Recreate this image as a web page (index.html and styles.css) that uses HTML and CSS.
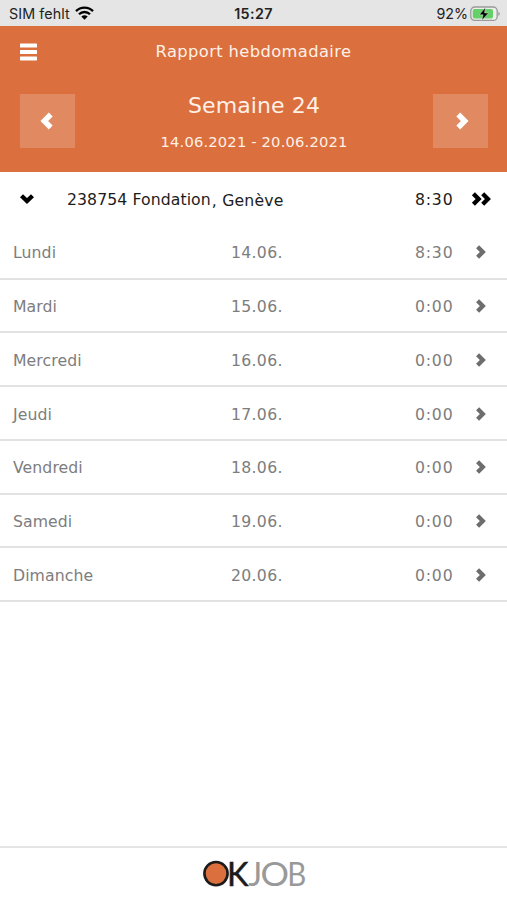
FILE: index.html
```html
<!DOCTYPE html>
<html lang="fr">
<head>
<meta charset="utf-8">
<title>Rapport hebdomadaire</title>
<link rel="stylesheet" href="styles.css">
</head>
<body>
<svg class="defs" width="0" height="0" aria-hidden="true">
  <symbol id="chevron" viewBox="0 0 12 16"><path d="M2.6 2.8 7.8 8l-5.2 5.2" fill="none" stroke="currentColor" stroke-width="4.3"/></symbol>
</svg>
<div class="status">
  <div class="carrier"><span>SIM fehlt</span>
    <svg class="wifi" width="19" height="14" viewBox="0 0 19 14" fill="none" stroke="#000" stroke-width="2.3"><path d="M1 5.1C5.6.4 13.4.4 18 5.1M4 8.3C7 5.2 12 5.2 15 8.3"/><path d="M6.3 10.6Q9.5 8 12.7 10.6L9.5 13.8Z" fill="#000" stroke="none"/></svg>
  </div>
  <div class="clock">15:27</div>
  <div class="power"><span>92%</span>
    <svg width="31" height="16" viewBox="0 0 31 16"><rect x=".8" y="1" width="26.4" height="13.4" rx="4" fill="#eee" stroke="#999" stroke-width="1.3"/><rect x="2.7" y="3" width="20.3" height="9.5" rx="2" fill="#65cf68"/><path d="M28.4 5.4q2.8 2.3 0 4.6z" fill="#999"/><path d="M15.3 1.6 9.3 8.8h3.8l-1.3 5.6 6.7-7.5h-3.9z" fill="#000" stroke="#d9f2d9" stroke-width=".5"/></svg>
  </div>
</div>
<header class="header">
  <div class="titlebar">
    <svg class="menu" width="17" height="18" viewBox="0 0 17 18" fill="#fff"><rect width="17" height="4" rx=".6" y=".5"/><rect y="7" width="17" height="4" rx=".6"/><rect y="13.4" width="17" height="4" rx=".6"/></svg>
    <h1>Rapport hebdomadaire</h1>
  </div>
  <div class="week">
    <button class="step"><svg class="flip" width="15" height="20"><use href="#chevron"/></svg></button>
    <div class="period"><div class="number">Semaine 24</div><div class="range">14.06.2021 - 20.06.2021</div></div>
    <button class="step"><svg width="15" height="20"><use href="#chevron"/></svg></button>
  </div>
</header>
<main class="list">
  <div class="project">
    <svg width="16" height="12" viewBox="0 0 16 12"><path d="M2.5 2.7 8 8.1l5.5-5.4" fill="none" stroke="#000" stroke-width="4.3"/></svg>
    <div class="name">238754 Fondation<span class="town">, Genève</span></div>
    <div class="hours">8:30</div>
    <svg class="double" width="21" height="16" viewBox="0 0 21 16"><path d="M2.4 2.8 7.6 8l-5.2 5.2M11.7 2.8 16.9 8l-5.2 5.2" fill="none" stroke="#000" stroke-width="4.3"/></svg>
  </div>
  <div class="row"><span>Lundi</span><span class="date">14.06.</span><span class="hours">8:30</span><svg width="12" height="16"><use href="#chevron"/></svg></div>
  <div class="row"><span>Mardi</span><span class="date">15.06.</span><span class="hours">0:00</span><svg width="12" height="16"><use href="#chevron"/></svg></div>
  <div class="row"><span>Mercredi</span><span class="date">16.06.</span><span class="hours">0:00</span><svg width="12" height="16"><use href="#chevron"/></svg></div>
  <div class="row"><span>Jeudi</span><span class="date">17.06.</span><span class="hours">0:00</span><svg width="12" height="16"><use href="#chevron"/></svg></div>
  <div class="row"><span>Vendredi</span><span class="date">18.06.</span><span class="hours">0:00</span><svg width="12" height="16"><use href="#chevron"/></svg></div>
  <div class="row"><span>Samedi</span><span class="date">19.06.</span><span class="hours">0:00</span><svg width="12" height="16"><use href="#chevron"/></svg></div>
  <div class="row"><span>Dimanche</span><span class="date">20.06.</span><span class="hours">0:00</span><svg width="12" height="16"><use href="#chevron"/></svg></div>
</main>
<footer class="footer">
  <svg width="107" height="46" viewBox="0 0 107 46" class="logo"><circle cx="16" cy="22.6" r="11.6" fill="#db6f3d" stroke="#1b1b1b" stroke-width="2.6"/><g fill="#999"><text x="27" y="34.6" fill="#1b1b1b" textLength="21.5" lengthAdjust="spacingAndGlyphs" stroke="#1b1b1b" stroke-width=".5">K</text><text x="48.3" y="34.6">J</text><text x="60.5" y="34.6" textLength="28.5" lengthAdjust="spacingAndGlyphs">O</text><text x="87.2" y="34.6" textLength="19" lengthAdjust="spacingAndGlyphs">B</text></g></svg>
</footer>
</body>
</html>
```
FILE: styles.css
```css
* { box-sizing: border-box; }
body { margin: 0; height: 900px; display: flex; flex-direction: column; background: #fff; font-family: Verdana, "DejaVu Sans", sans-serif; overflow: hidden; }
svg { display: block; flex: none; }
.defs { position: absolute; }
.status { height: 26px; background: #e5e5e5; display: grid; grid-template-columns: 1fr auto 1fr; align-items: center; padding: 1px 6px 0 9px; font: 14.3px Inter, sans-serif; color: #222; }
.carrier, .power { display: flex; align-items: center; gap: 6px; }
.carrier { letter-spacing: .1px; }
.wifi { margin: -2px 0 0 -1px; }
.power { justify-content: flex-end; gap: 2px; }
.clock { font-weight: 600; letter-spacing: .4px; margin-right: 3px; }
.header { height: 146px; background: #db6f3d; color: #fff1e7; }
.titlebar { height: 51px; display: grid; grid-template-columns: 17px 1fr 17px; padding: 0 20px; align-items: center; }
.menu { margin-top: 1px; }
h1 { margin: 0; font-size: 16.3px; font-weight: 400; text-align: center; letter-spacing: .4px; }
.week { display: flex; justify-content: space-between; padding: 17px 19px 0 20px; }
.step { width: 55px; height: 54px; border: 0; padding: 0; background: #e18a62; color: #fff; display: flex; align-items: center; justify-content: center; }
.step svg { margin: 0 -1px 0 2px; }
.step .flip { transform: scaleX(-1); margin: 0 3px 0 0; }
.period { text-align: center; }
.number { font-size: 22px; line-height: 24px; letter-spacing: .1px; }
.range { font-size: 14.7px; line-height: 20px; margin-top: 14px; letter-spacing: .18px; }
.list { flex: 1; color: #7d7d7d; font-size: 15.7px; letter-spacing: .08px; }
.project { height: 54px; display: grid; grid-template-columns: 48px 1fr 54px 38px; align-items: center; padding-left: 19px; color: #1c1c1c; }
.town { position: relative; top: 1px; margin-left: 1px; letter-spacing: .2px; }
.date { letter-spacing: .3px; }
.hours { letter-spacing: .8px; }
.project .double { margin-left: 2px; }
.row { height: 53.72px; display: grid; grid-template-columns: 218px 184px 60px 32px; align-items: center; padding: 2px 0 0 13px; border-bottom: 2px solid #e2e2e2; }
.row svg { color: #6d6d6d; margin-top: -1px; }
.footer { height: 54px; border-top: 2px solid #e4e4e4; display: flex; justify-content: center; align-items: center; }
.logo { font-family: Lato, sans-serif; font-size: 33px; }
```
